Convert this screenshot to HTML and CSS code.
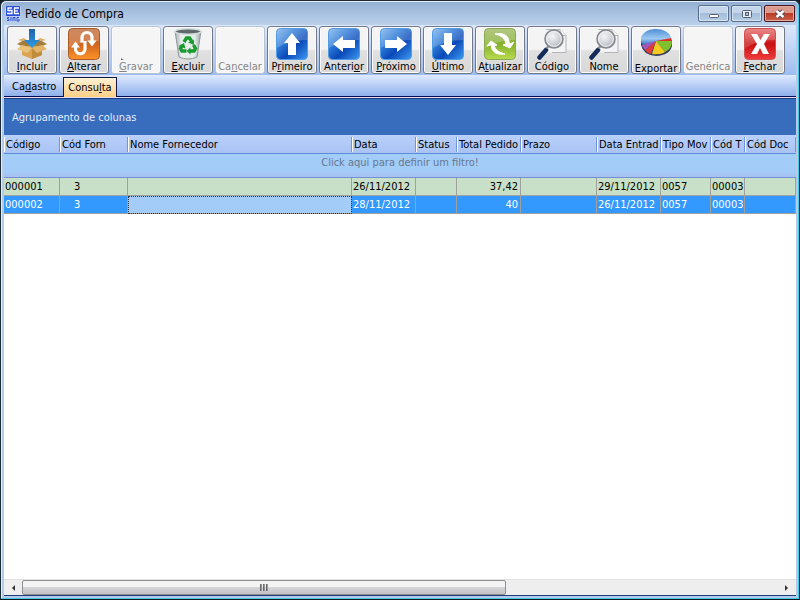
FILE: index.html
```html
<!DOCTYPE html>
<html lang="pt-BR">
<head>
<meta charset="utf-8">
<title>Pedido de Compra</title>
<link rel="stylesheet" href="styles.css">
</head>
<body>
<svg class="defs" width="0" height="0" aria-hidden="true">
  <defs>
    <linearGradient id="blue" x1="0" y1="0" x2="1" y2="1"><stop offset="0" stop-color="#7fb4ea"/><stop offset=".35" stop-color="#2a78d6"/><stop offset=".6" stop-color="#0a48b8"/><stop offset="1" stop-color="#3c9af0"/></linearGradient>
    <linearGradient id="orange" x1="0" y1="0" x2="0" y2="1"><stop offset="0" stop-color="#bd6c3c"/><stop offset=".5" stop-color="#cf6420"/><stop offset="1" stop-color="#ff9228"/></linearGradient>
    <linearGradient id="green" x1="0" y1="0" x2="0" y2="1"><stop offset="0" stop-color="#9fba62"/><stop offset=".5" stop-color="#86b02e"/><stop offset="1" stop-color="#b9dc50"/></linearGradient>
    <linearGradient id="red" x1="0" y1="0" x2="0" y2="1"><stop offset="0" stop-color="#e46a6a"/><stop offset=".5" stop-color="#c81010"/><stop offset="1" stop-color="#f03c3c"/></linearGradient>
    <linearGradient id="down" x1="0" y1="0" x2="0" y2="1"><stop offset="0" stop-color="#1f62a8"/><stop offset="1" stop-color="#2c9fe8"/></linearGradient>
    <linearGradient id="glass" x1="0" y1="0" x2="1" y2="0"><stop offset="0" stop-color="#a8b0b2"/><stop offset=".25" stop-color="#e9eeee"/><stop offset=".75" stop-color="#e4ebeb"/><stop offset="1" stop-color="#9ea8a9"/></linearGradient>
    <radialGradient id="lens" cx=".4" cy=".35" r=".7"><stop offset="0" stop-color="#f4f5f6"/><stop offset=".6" stop-color="#cdd1d6"/><stop offset="1" stop-color="#a3a8ae"/></radialGradient>
    <linearGradient id="pie" x1="0" y1="0" x2="0" y2="1"><stop offset="0" stop-color="#4f8fd6"/><stop offset=".6" stop-color="#9cc8f2"/><stop offset="1" stop-color="#2f6fc0"/></linearGradient>
    <symbol id="i-find" viewBox="0 0 32 32">
      <path d="M10 1.500h14l6 6v17H10z" fill="#f4f4f6"/><path d="M10 1.500h14l6 6v17H16" fill="none" stroke="#b4b4b8"/><path d="M24 1.500v6h6" fill="#fff" stroke="#b4b4b8"/>
      <path d="M10 22 3.500 29.500" stroke="#142a58" stroke-width="4.500" stroke-linecap="round"/><path d="m13 17.500-2.500 3" stroke="#8b9099" stroke-width="2.500"/>
      <circle cx="18" cy="11" r="9" fill="url(#lens)" stroke="#85898f" stroke-width="1.600"/><circle cx="18" cy="11" r="7.300" fill="none" stroke="#f3f3f3"/>
    </symbol>
  </defs>
</svg>
<div class="window">
  <header class="titlebar">
    <svg class="logo" viewBox="0 0 16 16" aria-hidden="true"><rect width="16" height="16" rx="1" fill="#b9cdf0"/><path d="M1 0h14v10H1z" fill="#2c50d8"/><path d="M7 2H3v2.500h4V7.500H2M14 2H9.500v5.500H14M9.500 4.800H13" fill="none" stroke="#fff" stroke-width="1.300"/><path d="M4 11.500H2.500V13H4v1.500H2M6 11v4M8 15v-3.500h2V15M14 11.500h-2V15h2v-2" fill="none" stroke="#2c50d8"/></svg>
    <h1>Pedido de Compra</h1>
    <button class="winbtn" aria-label="Minimizar"><svg viewBox="0 0 14 12"><rect x="2.500" y="6.500" width="9" height="3" rx="1" fill="#fff" stroke="#555f70"/></svg></button>
    <button class="winbtn" aria-label="Maximizar"><svg viewBox="0 0 14 12"><rect x="2.500" y="2.500" width="9" height="7" rx="1" fill="#e8eef6" stroke="#555f70"/><rect x="5.500" y="4.500" width="3" height="3" fill="#a9bfdc" stroke="#555f70"/></svg></button>
    <button class="winbtn close" aria-label="Fechar janela"><svg viewBox="0 0 14 12"><path d="m3.500 3 7 6m0-6-7 6" stroke="#555060" stroke-width="4.500"/><path d="m3.500 3 7 6m0-6-7 6" stroke="#fff" stroke-width="2.400"/></svg></button>
  </header>

  <nav class="toolbar" aria-label="Ações">
    <button class="tool"><svg viewBox="0 0 32 32"><path d="m1 16 7-4h16l7 4-7 3H8z" fill="#a67c3c"/><path d="M6 18h20v9l-10 4-10-4z" fill="#d9a552"/><path d="M16 20v11l10-4v-9z" fill="#c18b3b"/><path d="m6 17-5 4 10 4 5-5z" fill="#eac27a"/><path d="m26 17 5 4-10 4-5-5z" fill="#e3b468"/><path d="m6 13-4-1 6-2 4 3zm20 0 4-1-6-2-4 3z" fill="#dfb06a"/><path d="M13 1h6v11h5l-8 8-8-8h5z" fill="url(#down)"/></svg><span><u>I</u>ncluir</span></button>
    <button class="tool"><svg viewBox="0 0 32 32"><rect x=".5" y=".5" width="31" height="31" rx="4" fill="url(#orange)" stroke="#a85a28"/><path d="M1 5q0-4 4-4h22q4 0 4 4v8Q16 13 1 19z" fill="#fff" opacity=".2"/><path d="M7.500 18v3a4.500 4.500 0 0 0 9.500 0v-8M14 14.500V9.500a5 5 0 0 1 10 0V13" fill="none" stroke="#fff" stroke-width="3.200"/><path d="m3 19.500 4.500-6 4.500 6zm16.500-7h9l-4.500 6z" fill="#fff"/></svg><span><u>A</u>lterar</span></button>
    <button class="tool" disabled><svg viewBox="0 0 32 32"><path d="m1 30 3 2H1z" fill="#777"/></svg><span><u>G</u>ravar</span></button>
    <button class="tool"><svg viewBox="0 0 32 32"><path d="m3 3 4 26q9 4 18 0l4-26z" fill="url(#glass)" stroke="#8c9697"/><ellipse cx="16" cy="3.500" rx="13" ry="2.700" fill="#5f696b" stroke="#d5dddd" stroke-width="1.500"/><g fill="none" stroke="#189a2c" stroke-width="3.400"><path d="m12 14 2.500-4h3l2 3M21.500 17l2 3.500-1.500 2.500h-4M14.500 23H10l-1.500-2.500 1.500-3"/></g><path d="m16 14.500 6-3v5.500zM18.500 19.500v7l-4-3.500zM6.500 18l5.500-3 1.500 5.500z" fill="#189a2c"/></svg><span><u>E</u>xcluir</span></button>
    <button class="tool" disabled><svg viewBox="0 0 32 32"></svg><span>Ca<u>n</u>celar</span></button>
    <button class="tool"><svg viewBox="0 0 32 32"><rect x=".5" y=".5" width="31" height="31" rx="4" fill="url(#blue)" stroke="#4f9be6"/><path d="M1 5q0-4 4-4h22q4 0 4 4v7Q14 12 1 20z" fill="#fff" opacity=".2"/><path d="m16 5 8 10h-4v12h-8V15H8z" fill="#fff"/></svg><span>P<u>r</u>imeiro</span></button>
    <button class="tool"><svg viewBox="0 0 32 32"><rect x=".5" y=".5" width="31" height="31" rx="4" fill="url(#blue)" stroke="#4f9be6"/><path d="M1 5q0-4 4-4h22q4 0 4 4v7Q14 12 1 20z" fill="#fff" opacity=".2"/><path d="m5 16 10-8v4h12v8H15v4z" fill="#fff"/></svg><span>Anteri<u>o</u>r</span></button>
    <button class="tool"><svg viewBox="0 0 32 32"><rect x=".5" y=".5" width="31" height="31" rx="4" fill="url(#blue)" stroke="#4f9be6"/><path d="M1 5q0-4 4-4h22q4 0 4 4v7Q14 12 1 20z" fill="#fff" opacity=".2"/><path d="M27 16 17 8v4H5v8h12v4z" fill="#fff"/></svg><span><u>P</u>róximo</span></button>
    <button class="tool"><svg viewBox="0 0 32 32"><rect x=".5" y=".5" width="31" height="31" rx="4" fill="url(#blue)" stroke="#4f9be6"/><path d="M1 5q0-4 4-4h22q4 0 4 4v7Q14 12 1 20z" fill="#fff" opacity=".2"/><path d="m16 27 8-10h-4V5h-8v12H8z" fill="#fff"/></svg><span><u>Ú</u>ltimo</span></button>
    <button class="tool"><svg viewBox="0 0 32 32"><rect x=".5" y=".5" width="31" height="31" rx="4" fill="url(#green)" stroke="#8aa850"/><path d="M1 5q0-4 4-4h22q4 0 4 4v7Q14 12 1 20z" fill="#fff" opacity=".2"/><path d="M11 6q14-3 14.500 10l4.500-2-4 6-7-3 3-1Q21 8 11 6zM21 26Q8 28 7 17l-4 1 4-5 6 4-3 .5Q12 24 21 26z" fill="#fff" stroke="#fff"/></svg><span>A<u>t</u>ualizar</span></button>
    <button class="tool"><svg viewBox="0 0 32 32"><use href="#i-find"/></svg><span>Código</span></button>
    <button class="tool"><svg viewBox="0 0 32 32"><use href="#i-find"/></svg><span>Nome</span></button>
    <button class="tool tall"><svg viewBox="0 0 32 32"><path d="M1 12v4q2 10 15 11 14-1 16-10v-6z" fill="#35405c"/><path d="M1 11a15 10 0 0 1 30-2l-15 4-13 3q-2-2-2-5z" fill="url(#pie)"/><path d="m16 12 15-3 1 3z" fill="#e03028"/><path d="M16 12h16q0 8-7 11z" fill="#7fc02c"/><path d="m16 12 9 11q-4 3-13 2z" fill="#f3cb22"/><path d="m16 12-5 13q-4-1-6-4z" fill="#e23c38"/><path d="M16 12 5 21q-3-3-3-5z" fill="#a656b8"/></svg><span>Exportar</span></button>
    <button class="tool" disabled><svg viewBox="0 0 32 32"></svg><span>Genérica</span></button>
    <button class="tool"><svg viewBox="0 0 32 32"><rect x=".5" y=".5" width="31" height="31" rx="4" fill="url(#red)" stroke="#d05050"/><path d="M1 5q0-4 4-4h22q4 0 4 4v7Q14 12 1 20z" fill="#fff" opacity=".2"/><path d="M7 6h6l3.500 6L20 6h6l-6 10 5 10h-6l-3-6-3 6H7l6-10z" fill="#fff"/></svg><span><u>F</u>echar</span></button>
  </nav>

  <div class="tabs" role="tablist">
    <button class="tab" role="tab" aria-selected="false">Ca<u>d</u>astro</button>
    <button class="tab active" role="tab" aria-selected="true">Consu<u>l</u>ta</button>
  </div>

  <main class="grid">
    <div class="groupbar">Agrupamento de colunas</div>
    <table>
      <colgroup><col class="w56"><col class="w68"><col><col class="w64"><col class="w41"><col class="w64"><col class="w76"><col class="w64"><col class="w50"><col class="w34"><col class="w51"></colgroup>
      <thead>
        <tr class="heads"><th>Código</th><th>Cód Forn</th><th>Nome Fornecedor</th><th>Data</th><th>Status</th><th>Total Pedido</th><th>Prazo</th><th>Data Entrad</th><th>Tipo Mov</th><th>Cód T</th><th>Cód Doc</th></tr>
        <tr class="filter"><td colspan="11">Click aqui para definir um filtro!</td></tr>
      </thead>
      <tbody>
        <tr><td>000001</td><td class="forn">3</td><td></td><td>26/11/2012</td><td></td><td class="num">37,42</td><td></td><td>29/11/2012</td><td>0057</td><td>00003</td><td></td></tr>
        <tr class="selected"><td>000002</td><td class="forn">3</td><td class="focus"></td><td>28/11/2012</td><td></td><td class="num">40</td><td></td><td>26/11/2012</td><td>0057</td><td>00003</td><td></td></tr>
      </tbody>
    </table>
    <div class="scrollbar">
      <button aria-label="Rolar para a esquerda"><svg viewBox="0 0 8 8"><path d="M6 1v6L3 4z" fill="#333"/></svg></button>
      <div class="track"><div class="thumb"><i></i><i></i><i></i></div></div>
      <button aria-label="Rolar para a direita"><svg viewBox="0 0 8 8"><path d="M2 1v6l3-3z" fill="#333"/></svg></button>
    </div>
  </main>
</div>
</body>
</html>
```
FILE: styles.css
```css
* { box-sizing: border-box; }

body {
  margin: 0;
  background: #14202c;
  font-family: "DejaVu Sans Condensed", "DejaVu Sans", sans-serif;
  font-size: 11px;
  line-height: 14px;
  color: #000;
}

button {
  margin: 0;
  padding: 0;
  font: inherit;
  color: inherit;
}

.defs { position: absolute; }

.window {
  display: flex;
  flex-direction: column;
  height: 100vh;
  padding: 0 3px 3px;
  border: 1px solid #1c2a38;
  border-bottom-color: #10181f;
  border-radius: 6px 6px 0 0;
  background: #b3cbe6;
  box-shadow: inset -1px -1px 0 #48c8e8, inset 1px 1px 0 #e6f0fa;
}

.titlebar {
  display: flex;
  align-items: center;
  gap: 2px;
  height: 23px;
  margin: 1px -2px 0;
  padding: 0 3px 0 3px;
  border-radius: 5px 5px 0 0;
  background: linear-gradient(#93afd2, #a5bedd 40%, #b9d1ea);
}

.logo { width: 16px; height: 16px; }

.titlebar h1 {
  flex: 1;
  margin: 0 0 0 2px;
  font-size: 12px;
  font-weight: normal;
}

.winbtn {
  display: grid;
  place-items: center;
  width: 31px;
  height: 17px;
  border: 1px solid #5a6f8e;
  border-radius: 2px;
  background: linear-gradient(#c5d6ea 50%, #a5bdda 50%, #b8cee6);
  box-shadow: inset 0 0 0 1px #d6e4f2;
}

.winbtn svg { width: 14px; height: 12px; }

.winbtn.close {
  border-color: #4a1620;
  background: linear-gradient(#dc9a8c 45%, #b83c28 50%, #c9604a);
  box-shadow: inset 0 0 0 1px #e5aa9e;
}

.toolbar {
  display: flex;
  gap: 2px;
  height: 50px;
  padding: 1px 3px 0;
  background: linear-gradient(#dce8fb, #9dbdf0);
}

.tool {
  display: flex;
  flex-direction: column;
  align-items: center;
  width: 50px;
  height: 48px;
  padding-top: 1px;
  border: 1px solid #74798a;
  border-radius: 3px;
  background: linear-gradient(#f4f4f4 48%, #e0e0e0 52%, #d8d8d8);
  box-shadow: inset 0 0 0 1px #fafafa;
  white-space: nowrap;
}

.tool svg { flex: none; width: 32px; height: 32px; }
.tool.tall svg { height: 34px; }

.tool:disabled {
  border-color: #b9c2cf;
  background: #f5f5f5;
  color: #858585;
}

.tabs {
  display: flex;
  align-items: flex-end;
  gap: 2px;
  height: 22px;
  padding: 0 3px;
  border-bottom: 1px solid #000c50;
  background: linear-gradient(#dfeaff, #8fb0ea);
}

.tab {
  height: 20px;
  padding: 2px 5px 0;
  border: 0;
  background: none;
}

.tab.active {
  padding: 1px 4px 0;
  border: 1px solid #101848;
  border-bottom: 0;
  background: linear-gradient(#fff2d4, #ffcf86);
  margin-bottom: -1px;
}

.grid {
  flex: 1;
  display: flex;
  flex-direction: column;
  margin-top: 1px;
  border: solid #1c3c80;
  border-width: 1px 0;
  background: #fff;
  box-shadow: 0 -1px 0 #e4dcf0;
}

.groupbar {
  padding: 12px 8px 10px;
  background: #386cbc;
  color: #e4efff;
}

table {
  width: 100%;
  table-layout: fixed;
  border-collapse: separate;
  border-spacing: 0;
}

.w34 { width: 34px; }
.w41 { width: 41px; }
.w50 { width: 50px; }
.w51 { width: 51px; }
.w56 { width: 56px; }
.w64 { width: 64px; }
.w68 { width: 68px; }
.w76 { width: 76px; }

th, td {
  overflow: hidden;
  padding: 0 1px;
  text-align: left;
  white-space: nowrap;
  font-weight: normal;
}

.heads th {
  height: 19px;
  padding: 2px 0 0 2px;
  border-bottom: 1px solid #5c8cd4;
  background:
    linear-gradient(#6f96d8, #6f96d8) right 2px / 1px 15px no-repeat,
    linear-gradient(#fff, #fff) left 2px / 1px 15px no-repeat,
    linear-gradient(#b8d0fa, #a9c3f4);
}

.filter td {
  height: 24px;
  padding-bottom: 5px;
  border-bottom: 1px solid #6f92d0;
  background: linear-gradient(#a4ccf8 80%, #a9bff2);
  color: #647890;
  text-align: center;
}

tbody td {
  height: 18px;
  padding-top: 1px;
  border: solid #a0a0a0;
  border-width: 0 1px 1px 0;
  background: #c8e0c8;
}

.selected td { background: #3399ff; color: #fff; }
.selected .focus { background: #a4ccf8; outline: 1px dotted #303030; outline-offset: -1px; }

tbody .forn { padding-left: 14px; }
tbody .num { padding-right: 2px; text-align: right; }

.scrollbar {
  display: flex;
  height: 16px;
  margin-top: auto;
  border-top: 1px solid #e2e2e2;
  background: #eeeeee;
}

.scrollbar button {
  display: grid;
  place-items: center;
  width: 18px;
  border: 0;
  background: none;
}

.scrollbar svg { width: 8px; height: 8px; }

.track { flex: 1; display: flex; }

.thumb {
  display: flex;
  justify-content: center;
  align-items: center;
  gap: 1px;
  width: 64%;
  border: 1px solid #8f8f8f;
  border-radius: 2px;
  background: linear-gradient(#f4f4f4 45%, #d5d5d8 50%, #c4c4c8);
}

.thumb i { width: 2px; height: 7px; background: linear-gradient(90deg, #555, #aaa); }
```
